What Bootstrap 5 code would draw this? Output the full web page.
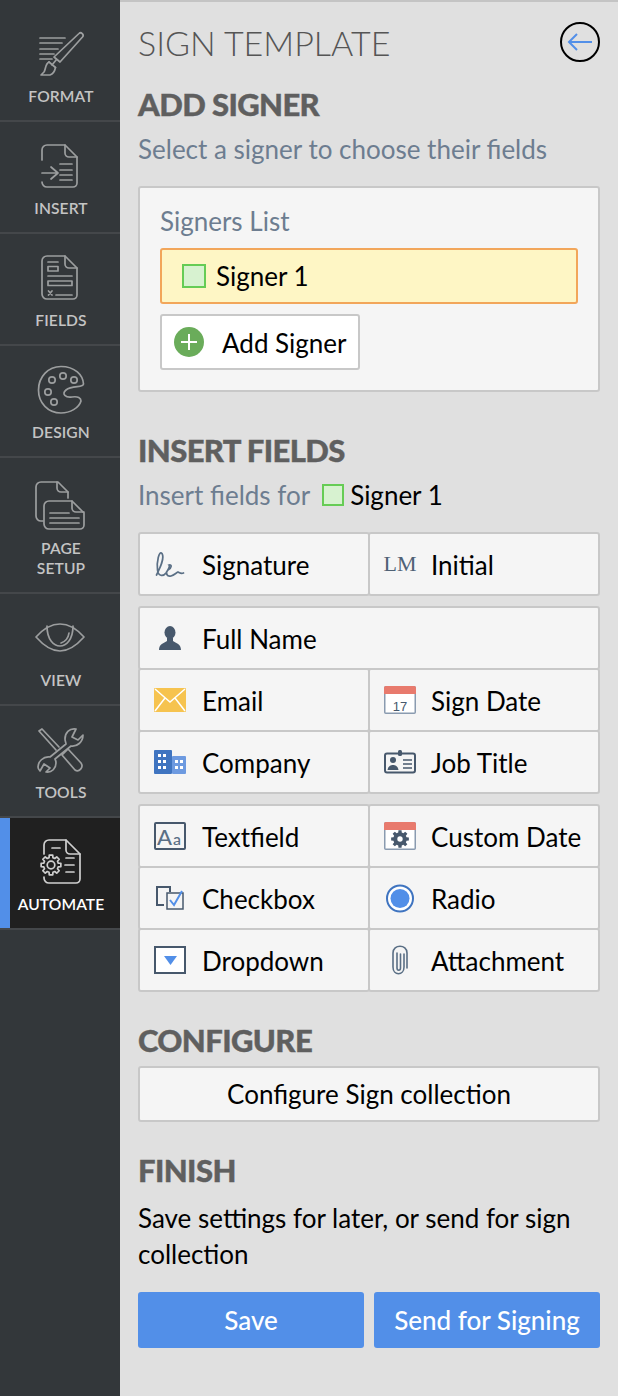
<!DOCTYPE html>
<html lang="en">
<head>
<meta charset="utf-8">
<title>Sign Template</title>
<link href="https://cdn.jsdelivr.net/npm/bootstrap@5.3.0/dist/css/bootstrap.min.css" rel="stylesheet">
<style>
html,body{height:100%;margin:0}
body{font-family:"Lato","Liberation Sans",sans-serif;background:#e0e0e0;color:#000;font-size:26px;overflow:hidden}
.shell{width:618px;height:1396px}
.rail{width:120px;flex:0 0 120px;background:#33373a}
.rail-item{height:112px;border-bottom:2px solid #44474a;padding-top:18px;color:#c4c4c4;font-size:15.6px;line-height:20px;font-weight:600;text-align:center;letter-spacing:.1px}
.rail-lab{display:block;padding-left:2px}
.rail-item svg{display:block;width:52px;height:52px;margin:0 auto 6px;fill:none;stroke:#9c9e9f;stroke-width:1.7;stroke-linecap:round;stroke-linejoin:round}
.rail-first{height:122px;padding-top:28px}
.rail-tall{height:136px;padding-top:22px}
.rail-active{background:#202020;color:#fff;box-shadow:inset 10px 0 0 #528fe8}
.rail-active svg{stroke:#cfcfcf}
.pane{flex:1;border-top:2px solid #c4c4c4;padding:20px 18px 0;min-width:0}
.title-row{height:40px}
.pane-title{font-weight:300;font-size:34px;line-height:44px;color:#555;margin:-1px 0 0}
.back-btn{width:40px;height:40px;border:2px solid #000;border-radius:50%;padding:0;background:transparent;display:flex;align-items:center;justify-content:center}
.sec-h{font-size:31px;font-weight:900;line-height:34px;padding-bottom:2px;color:#5f5f5f;margin:0;letter-spacing:-.6px;-webkit-text-stroke:.4px #5f5f5f}
.sub-t{line-height:36px;color:#6d7d90;margin-top:8px}
.h-a{margin-top:25px}.h-b{margin-top:41px}.h-c{margin-top:31px}.h-d{margin-top:31px}
.signer-card{margin-top:19px;height:206px;background:#f5f5f5;border:2px solid #c8c8c8;border-radius:3px;padding:15px 20px 20px}
.card-h{line-height:36px;color:#6d7d90}
.signer-bar{height:56px;margin-top:9px;background:#fef6c5;border:2px solid #f2a65a;border-radius:3px;padding-left:20px;gap:10px}
.swatch{display:block;width:24px;height:24px;background:#d7f2d0;border:2px solid #66cc55;flex:none}
.swatch-sm{width:22px;height:22px;margin:0 6px 0 12px}
.add-btn{height:56px;width:200px;margin-top:10px;background:#fff;border:2px solid #c8c8c8;border-radius:3px;color:#000;font-size:26px;padding:0 0 0 12px;gap:18px;line-height:1}
.add-btn:hover{background:#fff;border-color:#c8c8c8;color:#000}
.add-btn span{padding-top:2px}
.field-grid{display:grid;grid-template-columns:230px 232px;grid-auto-rows:62px;padding-bottom:2px;margin-bottom:10px}
.field-cell{width:232px;height:64px;background:#f5f5f5;border:2px solid #c8c8c8;border-radius:3px;padding-left:10px;gap:12px;line-height:1}
.field-cell>span:last-child{padding-top:2px}
.field-cell svg,.field-cell .lm-ico{width:40px;height:32px;flex:none}
.field-wide{grid-column:1/-1;width:462px}
.even-shift{gap:11px}
.ico-stroke{fill:none;stroke:#47586c;stroke-width:2}
.ico-box{fill:#fff;stroke:#47586c;stroke-width:2}
.lm-ico{font-family:"Liberation Serif",serif;font-size:22px;color:#4f6175;display:flex;align-items:center;justify-content:center;line-height:1}
.wide-btn{width:462px;height:56px;margin-top:7px;background:#f5f5f5;border:2px solid #c8c8c8;border-radius:3px;color:#000;font-size:26px;padding:0;line-height:1}
.wide-btn:hover{background:#f5f5f5;border-color:#c8c8c8;color:#000}
.finish-t{line-height:36px;margin-top:11px}
.act-btn{width:226px;height:56px;background:#528fe8;border:0;border-radius:3px;color:#fff;font-size:26px;font-weight:500;padding:0;line-height:1}
.act-btn:hover{background:#528fe8;color:#fff}
.act-row{margin-top:20px;gap:10px}
.top-gap{margin-top:19px}
</style>
</head>
<body>
<div class="shell d-flex">
  <nav class="rail">
    <div class="rail-item rail-first">
      <svg viewBox="34 28 52 52"><path d="M40 38H65M40 43H62M40 49H58M40 54H54M40 59H52"/><path d="M79 33.5C81 31.5 84.500 34.500 82.500 37L60 62 54 57Z"/><path d="M56.500 59.500 52 65M49 62 55.500 67.500"/><path d="M49 62C45 64 46 69 44 72L41 75H50C53 74 55 70 55.500 67.500"/></svg>
      <span class="rail-lab">FORMAT</span>
    </div>
    <div class="rail-item">
      <svg viewBox="34 140 52 52"><path d="M42 160V150A5 5 0 0 1 47 145H65L77 157V183A4 4 0 0 1 73 187H47A5 5 0 0 1 42 182"/><path d="M65 145V153A4 4 0 0 0 69 157H77"/><path d="M42 173H57M51 167 58 173 51 179M60 164H72M60 170H72M60 175H72M60 180H72"/></svg>
      <span class="rail-lab">INSERT</span>
    </div>
    <div class="rail-item">
      <svg viewBox="34 252 52 52"><path d="M42 261A5 5 0 0 1 47 256H65L77 268V295A4 4 0 0 1 73 299H47A5 5 0 0 1 42 294Z"/><path d="M65 256V264A4 4 0 0 0 69 268H77"/><path d="M48 262H58M48 266.500H58V271H48ZM48 276H72M48 281H72V285.500H48ZM48.500 291 52 295M52 291 48.500 295M56 295H72"/></svg>
      <span class="rail-lab">FIELDS</span>
    </div>
    <div class="rail-item">
      <svg viewBox="34 364 52 52"><path d="M61 366.500C75 366.500 83 375 83.500 384C83.500 388 72 385 66 390C61 394 66 398 72 397C78 396 81 398 81 401C79 408 70 413 61 413C48 413 38.500 403 38.500 390C38.500 377 48 366.500 61 366.500Z"/><circle cx="52" cy="380" r="3.200"/><circle cx="63" cy="376" r="3.200"/><circle cx="74" cy="380" r="3.200"/><circle cx="48" cy="392" r="3.200"/><circle cx="54" cy="402" r="3.200"/></svg>
      <span class="rail-lab">DESIGN</span>
    </div>
    <div class="rail-item rail-tall">
      <svg viewBox="34 480 52 52"><path d="M43 521H41A5 5 0 0 1 36 516V487A5 5 0 0 1 41 482H58L68 492V498"/><path d="M57 482V488A4 4 0 0 0 61 492H68"/><path d="M49 501H72L84 513V525A4 4 0 0 1 80 529H49A5 5 0 0 1 44 524V506A5 5 0 0 1 49 501Z"/><path d="M72 501V508A4 4 0 0 0 76 512H84"/><path d="M50 513H69M50 518H79M50 523H79"/></svg>
      <span class="rail-lab">PAGE<br>SETUP</span>
    </div>
    <div class="rail-item">
      <svg viewBox="34 612 52 52"><path d="M36 637C44 628 52 624 60 624C68 624 76 628 84 637C76 646 68 651 60 651C52 651 44 646 36 637Z"/><path d="M47 626C47 640 54 646 60 646C66 646 73 640 73 626"/><path d="M69 633C68 640 64 642 61 643"/></svg>
      <span class="rail-lab">VIEW</span>
    </div>
    <div class="rail-item">
      <svg viewBox="34 724 52 52"><path d="M76 729C69 728 65 733 65 739C65 741 66 743 66 744L50 757C43 756 38 762 38 767C38 769 39 770 40 771L44 764 50 768 46 772C52 773 56 768 56 763C56 761 55.500 760 55 759L71 746C77 747 83 742 83 735L78 740 72 737Z"/><path d="M39 731 42 729 59 747M39 731 56 750"/><path d="M62 755 68 749 81 763C84 767 79 773 75 770Z"/></svg>
      <span class="rail-lab">TOOLS</span>
    </div>
    <div class="rail-item rail-active">
      <svg viewBox="34 836 52 52"><path d="M44 854V845A5 5 0 0 1 49 840H66L80 854V879A4 4 0 0 1 76 883H49A5 5 0 0 1 44 878V877"/><path d="M66 840V850A4 4 0 0 0 70 854H80"/><path d="M52 848H60M66 858H74M65 865H74M66 872H74"/><polygon points="60.850,866.740 58.240,866.940 57.500,868.750 59.190,870.740 56.740,873.190 54.750,871.500 52.940,872.240 52.740,874.850 49.260,874.850 49.060,872.240 47.250,871.500 45.260,873.190 42.810,870.740 44.500,868.750 43.760,866.940 41.150,866.740 41.150,863.260 43.760,863.060 44.500,861.250 42.810,859.260 45.260,856.810 47.250,858.500 49.060,857.760 49.260,855.150 52.740,855.150 52.940,857.760 54.750,858.500 56.740,856.810 59.190,859.260 57.500,861.250 58.240,863.060 60.850,863.260"/><circle cx="51" cy="865" r="3.800"/></svg>
      <span class="rail-lab">AUTOMATE</span>
    </div>
  </nav>

  <main class="pane">
    <div class="title-row d-flex justify-content-between align-items-start">
      <h1 class="pane-title">SIGN TEMPLATE</h1>
      <button class="back-btn" type="button" aria-label="Back">
        <svg width="28" height="20" viewBox="0 0 28 20" fill="none" stroke="#528fe8" stroke-width="2"><path d="M26 10H3M11 2 3 10 11 18"/></svg>
      </button>
    </div>

    <h2 class="sec-h h-a">ADD SIGNER</h2>
    <div class="sub-t">Select a signer to choose their fields</div>

    <div class="card signer-card">
      <div class="card-h">Signers List</div>
      <div class="signer-bar d-flex align-items-center"><span class="swatch"></span><span>Signer 1</span></div>
      <button class="btn add-btn d-flex align-items-center" type="button">
        <svg width="30" height="30" viewBox="0 0 30 30"><circle cx="15" cy="15" r="15" fill="#6aac5a"/><path d="M15 7V23M7 15H23" stroke="#fff" stroke-width="2"/></svg>
        <span>Add Signer</span>
      </button>
    </div>

    <h2 class="sec-h h-b">INSERT FIELDS</h2>
    <div class="sub-t d-flex align-items-center">Insert fields for<span class="swatch swatch-sm"></span><span class="text-black">Signer 1</span></div>

    <div class="field-grid top-gap">
      <div class="field-cell d-flex align-items-center">
        <svg viewBox="150 548 40 32" fill="none" stroke="#5a6f85" stroke-width="1.700" stroke-linecap="round"><path d="M156.500 575C160 568 165 558 162 553.500C159 550 156.500 562 157.500 570C158 576 163 577 166 573C168 570 170 566 169 565C172 564 172 568 168 570C165 573 167 577 171 576C174 575 176 573 178 572C180 573 181 574 183.500 573"/></svg>
        <span>Signature</span>
      </div>
      <div class="field-cell even-shift d-flex align-items-center">
        <span class="lm-ico">LM</span>
        <span>Initial</span>
      </div>
    </div>

    <div class="field-grid">
      <div class="field-cell field-wide d-flex align-items-center">
        <svg viewBox="150 622 40 32" fill="#47586c"><ellipse cx="170" cy="632.500" rx="5.500" ry="6.500"/><path d="M167 638H173V641C176 643 181 644 181 650H159C159 644 164 643 167 641Z"/></svg>
        <span>Full Name</span>
      </div>
      <div class="field-cell d-flex align-items-center">
        <svg viewBox="150 684 40 32"><rect x="154" y="688" width="32" height="24" rx="1" fill="#f6c34f"/><path d="M155 689 170 702 185 689M155 711 165 698M185 711 175 698" fill="none" stroke="#fff" stroke-width="1.500"/></svg>
        <span>Email</span>
      </div>
      <div class="field-cell even-shift d-flex align-items-center">
        <svg viewBox="380 684 40 32"><rect x="384.750" y="686.750" width="30.500" height="26.500" rx="1" fill="#fff" stroke="#8a9bb0" stroke-width="1.500"/><path d="M384 688A2 2 0 0 1 386 686H414A2 2 0 0 1 416 688V694H384Z" fill="#e87a6d"/><text x="400" y="711" text-anchor="middle" font-family="Liberation Sans,sans-serif" font-size="13" fill="#47586c">17</text></svg>
        <span>Sign Date</span>
      </div>
      <div class="field-cell d-flex align-items-center">
        <svg viewBox="150 746 40 32"><rect x="154" y="750" width="18" height="24" rx="1" fill="#3f74c0"/><rect x="172" y="756" width="14" height="18" rx="1" fill="#6d9ae0"/><path d="M158 754H161V757H158ZM163 754H166V757H163ZM158 760H161V763H158ZM163 760H166V763H163ZM158 766H161V769H158ZM163 766H166V769H163ZM175 760H178V763H175ZM180 760H183V763H180ZM175 766H178V769H175ZM180 766H183V769H180Z" fill="#fff"/></svg>
        <span>Company</span>
      </div>
      <div class="field-cell even-shift d-flex align-items-center">
        <svg viewBox="380 746 40 32"><rect x="385" y="753.500" width="30" height="19" rx="2" class="ico-stroke"/><rect x="398" y="750" width="4" height="6" rx="1.500" fill="#47586c"/><circle cx="393" cy="760" r="3" fill="#47586c"/><path d="M387.500 770C388 766 391 765 393 765C395 765 398 766 398.500 770Z" fill="#47586c"/><path d="M403 760H412M403 764H412M403 768H412" stroke="#47586c" stroke-width="1.500"/></svg>
        <span>Job Title</span>
      </div>
    </div>

    <div class="field-grid">
      <div class="field-cell d-flex align-items-center">
        <svg viewBox="150 820 40 32"><rect x="155" y="823" width="30" height="26" rx="1" class="ico-stroke"/><text x="157" y="845" font-family="Lato,sans-serif" font-weight="500" font-size="22" fill="#5a6f85">A<tspan font-size="16" dx="1">a</tspan></text></svg>
        <span>Textfield</span>
      </div>
      <div class="field-cell even-shift d-flex align-items-center">
        <svg viewBox="380 820 40 32"><rect x="384.750" y="822.750" width="30.500" height="26.500" rx="1" fill="#fff" stroke="#8a9bb0" stroke-width="1.500"/><path d="M384 824A2 2 0 0 1 386 822H414A2 2 0 0 1 416 824V830H384Z" fill="#e87a6d"/><polygon fill="#47586c" transform="translate(400 839) scale(.9) translate(-51 -865)" points="60.850,866.740 58.240,866.940 57.500,868.750 59.190,870.740 56.740,873.190 54.750,871.500 52.940,872.240 52.740,874.850 49.260,874.850 49.060,872.240 47.250,871.500 45.260,873.190 42.810,870.740 44.500,868.750 43.760,866.940 41.150,866.740 41.150,863.260 43.760,863.060 44.500,861.250 42.810,859.260 45.260,856.810 47.250,858.500 49.060,857.760 49.260,855.150 52.740,855.150 52.940,857.760 54.750,858.500 56.740,856.810 59.190,859.260 57.500,861.250 58.240,863.060 60.850,863.260"/><circle cx="400" cy="839" r="2.700" fill="#fff"/></svg>
        <span>Custom Date</span>
      </div>
      <div class="field-cell d-flex align-items-center">
        <svg viewBox="150 882 40 32" fill="none"><path d="M170 892V887H157V905H164" stroke="#47586c" stroke-width="2"/><rect x="167" y="893" width="16" height="16" stroke="#47586c" stroke-width="1.500"/><path d="M170 900 174 905 182 891" stroke="#528fe8" stroke-width="2"/></svg>
        <span>Checkbox</span>
      </div>
      <div class="field-cell even-shift d-flex align-items-center">
        <svg viewBox="380 882 40 32"><circle cx="400" cy="898.500" r="13" fill="#fff" stroke="#3f74c0" stroke-width="2"/><circle cx="400" cy="898.500" r="9.500" fill="#528fe8"/></svg>
        <span>Radio</span>
      </div>
      <div class="field-cell d-flex align-items-center">
        <svg viewBox="150 944 40 32"><rect x="155" y="947" width="30" height="26" class="ico-box"/><path d="M164 956H177L170.500 965Z" fill="#528fe8"/></svg>
        <span>Dropdown</span>
      </div>
      <div class="field-cell even-shift d-flex align-items-center">
        <svg viewBox="380 944 40 32" fill="none" stroke="#5a6f85" stroke-width="1.600" stroke-linecap="round"><path d="M404 954V967C404 976 393 976 393 967V953C393 944 407 944 407 953V968"/><path d="M397 953V968C397 971 400.500 971 400.500 968V954"/></svg>
        <span>Attachment</span>
      </div>
    </div>

    <h2 class="sec-h h-d">CONFIGURE</h2>
    <button class="btn wide-btn" type="button">Configure Sign collection</button>

    <h2 class="sec-h h-c">FINISH</h2>
    <div class="finish-t">Save settings for later, or send for sign collection</div>
    <div class="d-flex act-row">
      <button class="btn act-btn" type="button">Save</button>
      <button class="btn act-btn" type="button">Send for Signing</button>
    </div>
  </main>
</div>
</body>
</html>
